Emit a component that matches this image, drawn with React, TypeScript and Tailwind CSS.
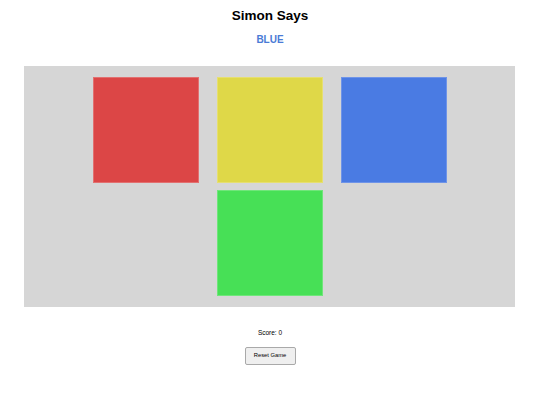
import React, { useState } from "react";

const PADS = [
  { name: "red", cls: "bg-[#dc4646] border-[#e27070]" },
  { name: "yellow", cls: "bg-[#dfd848] border-[#e6df70]" },
  { name: "blue", cls: "bg-[#4a7be3] border-[#6f94e8]" },
  { name: "green", cls: "bg-[#47e056] border-[#6fe67a]" },
];

export default function App() {
  const [score, setScore] = useState(0);

  return (
    <div className="flex min-h-[405px] w-full flex-col items-center bg-white font-['Liberation_Sans',Arial,sans-serif] text-black">
      <h1 className="mt-[8px] text-[13.5px] font-bold leading-[16px]">Simon Says</h1>
      <div className="mt-[10px] text-[10px] font-bold leading-[12px] text-[#4a7bd6]">BLUE</div>

      <div className="mt-[20px] flex h-[241px] w-[491px] flex-wrap content-start justify-center gap-x-[18px] gap-y-[7px] self-start ml-[24px] bg-[#d6d6d6] px-[68px] pt-[11px]">
        {PADS.map((p) => (
          <button
            key={p.name}
            aria-label={p.name}
            onClick={() => setScore(score)}
            className={`h-[106px] w-[106px] border ${p.cls}`}
          />
        ))}
      </div>

      <div className="mt-[22px] text-[6.5px] leading-[8px]">Score: {score}</div>
      <button
        onClick={() => setScore(0)}
        className="mt-[10px] h-[18px] w-[51px] rounded-[2px] border border-[#a9a9a9] bg-[#efefef] text-[5.8px] leading-none"
      >
        Reset Game
      </button>
    </div>
  );
}
